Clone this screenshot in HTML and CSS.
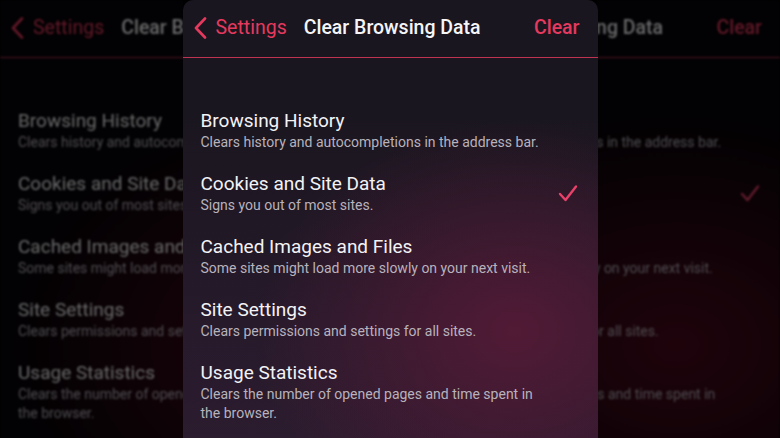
FILE: index.html
```html
<!DOCTYPE html>
<html lang="en">
<head>
  <meta charset="UTF-8" />
  <meta name="viewport" content="width=device-width, initial-scale=1.0"/>
  <title>Clear Browsing Data</title>
  <link rel="stylesheet" href="styles.css">
</head>
<body>
  <div class="stage" id="stage">
    <div class="backdrop backdrop-left" id="back-left"></div>
    <div class="backdrop backdrop-right" id="back-right"></div>

    <div class="screen" id="screen">
      <div class="navbar">
        <div class="back">
          <svg class="chevron" width="14" height="22" viewBox="0 0 14 22">
            <polyline points="11,1.5 2,11 11,20.5" />
          </svg>
          <span>Settings</span>
        </div>
        <div class="nav-title">Clear Browsing Data</div>
        <div class="nav-action">Clear</div>
      </div>

      <ul class="options">
        <li class="option">
          <div class="option-text">
            <div class="option-title">Browsing History</div>
            <div class="option-sub">Clears history and autocompletions in the address bar.</div>
          </div>
        </li>
        <li class="option checked">
          <div class="option-text">
            <div class="option-title">Cookies and Site Data</div>
            <div class="option-sub">Signs you out of most sites.</div>
          </div>
          <svg class="check" width="20" height="20" viewBox="0 0 20 20">
            <polyline points="2,10 7.5,16 18,2.5" />
          </svg>
        </li>
        <li class="option">
          <div class="option-text">
            <div class="option-title">Cached Images and Files</div>
            <div class="option-sub">Some sites might load more slowly on your next visit.</div>
          </div>
        </li>
        <li class="option">
          <div class="option-text">
            <div class="option-title">Site Settings</div>
            <div class="option-sub">Clears permissions and settings for all sites.</div>
          </div>
        </li>
        <li class="option">
          <div class="option-text">
            <div class="option-title">Usage Statistics</div>
            <div class="option-sub">Clears the number of opened pages and time spent in the browser.</div>
          </div>
        </li>
      </ul>
    </div>
  </div>

  <script>
    // blurred copies of the screen fill the wide frame on both sides
    const screen = document.getElementById("screen");
    ["back-left", "back-right"].forEach(function (id) {
      const copy = screen.cloneNode(true);
      copy.removeAttribute("id");
      copy.classList.add("screen-copy");
      document.getElementById(id).appendChild(copy);
    });
  </script>
</body>
</html>
```

FILE: styles.css
```css
* {
  box-sizing: border-box;
}
body {
  margin: 0;
  background: #000;
  font-family: Roboto, 'Noto Sans', sans-serif;
  overflow: hidden;
}
.stage {
  position: relative;
  width: 780px;
  height: 438px;
  display: flex;
  justify-content: center;
  overflow: hidden;
}
.screen {
  position: relative;
  z-index: 1;
  flex-shrink: 0;
  width: 415px;
  height: 460px;
  border-radius: 10px 10px 0 0;
  color: #f3f2f5;
  background:
    radial-gradient(ellipse 260px 210px at 80% 72%, rgba(84, 26, 54, 0.95), rgba(84, 26, 54, 0)),
    linear-gradient(to bottom, #1a161f 25%, #261a2b 70%, #2c1c2f);
}
.backdrop {
  position: absolute;
  top: 0;
  width: 183px;
  height: 438px;
  display: flex;
  overflow: hidden;
}
.backdrop-left {
  left: 0;
}
.backdrop-right {
  right: 0;
  justify-content: flex-end;
}
.screen-copy {
  z-index: 0;
  border-radius: 0;
  filter: brightness(0.42) blur(1.2px);
  background:
    radial-gradient(ellipse 300px 230px at 75% 75%, rgba(80, 8, 30, 0.9), rgba(80, 8, 30, 0)),
    #050306;
}

.navbar {
  height: 58px;
  display: flex;
  align-items: center;
  padding: 0 18px 2px 11px;
  border-bottom: 1.5px solid #bf3252;
}
.back {
  display: flex;
  align-items: center;
  gap: 8px;
  color: #e5395e;
  font-size: 19.5px;
}
.chevron {
  fill: none;
  stroke: #e5395e;
  stroke-width: 2.6;
  stroke-linecap: round;
  stroke-linejoin: round;
}
.nav-title {
  margin-left: 17px;
  font-size: 19.5px;
  font-weight: 500;
  color: #f5f4f7;
}
.nav-action {
  margin-left: auto;
  font-size: 19.5px;
  font-weight: 500;
  color: #e5395e;
}

.options {
  list-style: none;
  margin: 0;
  padding: 51px 20px 0 18px;
  display: flex;
  flex-direction: column;
  gap: 20px;
}
.option {
  display: flex;
  align-items: center;
  gap: 12px;
}
.option-text {
  flex: 1;
  padding-right: 32px;
}
.option.checked .option-text {
  padding-right: 0;
}
.option-title {
  font-size: 19px;
  line-height: 24px;
  color: #f3f2f5;
}
.option-sub {
  font-size: 14px;
  line-height: 19px;
  color: #b8b2bc;
}
.check {
  fill: none;
  stroke: #e8416a;
  stroke-width: 2.4;
  stroke-linecap: round;
  stroke-linejoin: round;
}
```
